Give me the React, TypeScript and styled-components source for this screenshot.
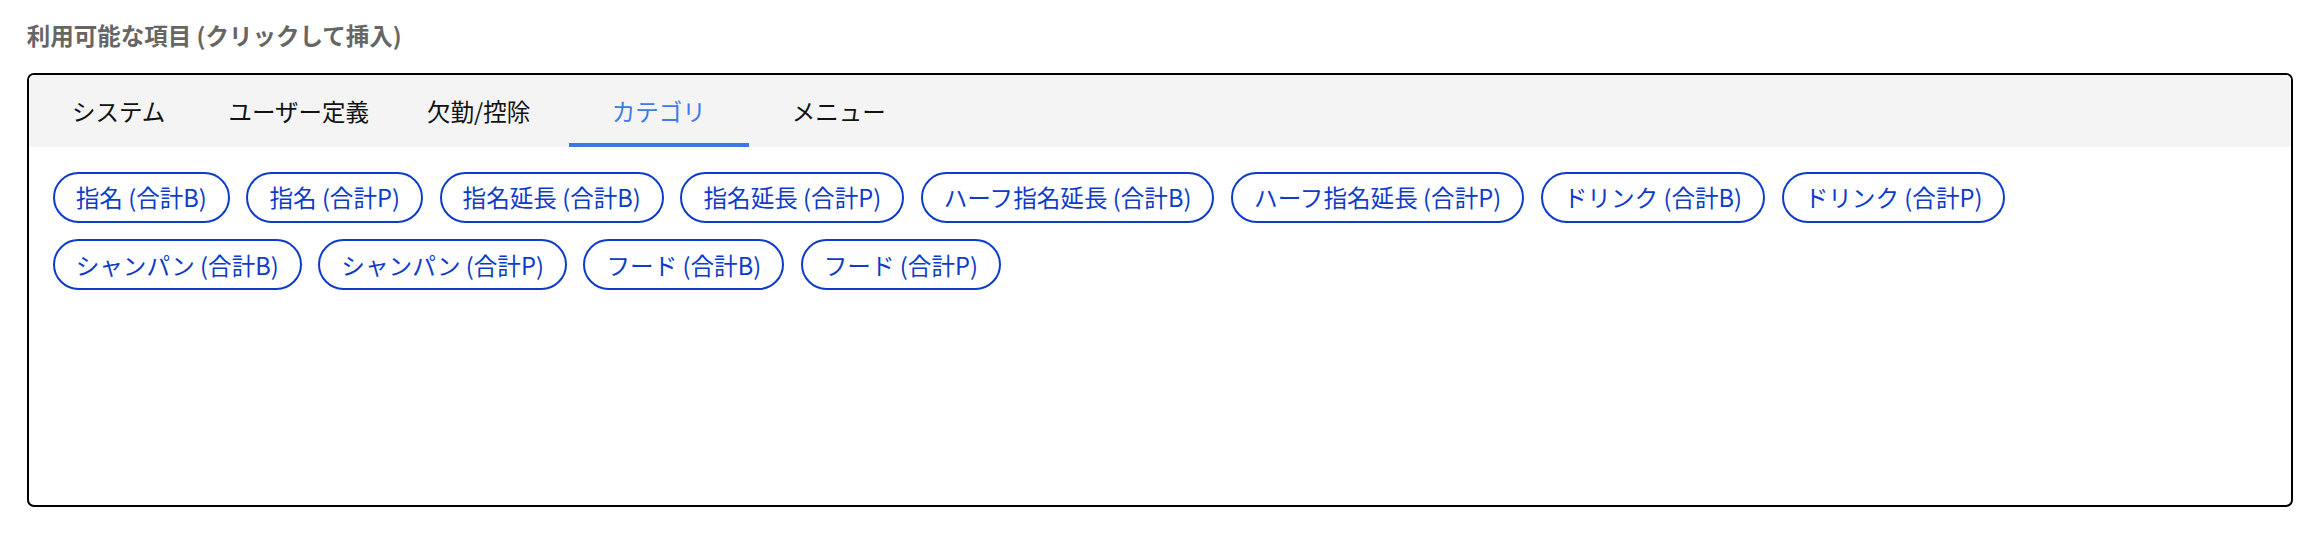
import React from "react";
import styled, { createGlobalStyle } from "styled-components";

const GlobalStyle = createGlobalStyle`
  html, body { margin: 0; padding: 0; background: #ffffff; }
  body { font-family: "Noto Sans CJK JP", "Noto Sans", sans-serif; }
  * { box-sizing: border-box; }
`;

const Page = styled.div`
  padding: 17px 21px 0 26.7px;
`;

const Title = styled.div`
  font-size: 23.5px;
  line-height: 36px;
  font-weight: 700;
  color: #666666;
  margin: 0 0 20.3px;
`;

const Panel = styled.div`
  border: 2px solid #000000;
  border-radius: 7px;
  height: 434px;
  overflow: hidden;
  display: flex;
  flex-direction: column;
`;

const TabBar = styled.div`
  display: flex;
  background: #f4f4f4;
  height: 71.4px;
  flex-shrink: 0;
`;

const Tab = styled.button<{ $active?: boolean }>`
  appearance: none;
  border: none;
  background: transparent;
  min-width: 180px;
  padding: 4px 18px 0;
  height: 100%;
  display: flex;
  align-items: center;
  justify-content: center;
  font-family: inherit;
  font-size: 23.5px;
  color: ${(p) => (p.$active ? "#3e7be6" : "#111111")};
  border-bottom: 4px solid ${(p) => (p.$active ? "#3b78e6" : "transparent")};
  cursor: pointer;
`;

const ChipArea = styled.div`
  display: flex;
  flex-direction: column;
  gap: 16.6px;
  padding: 25px 24px;
`;

const ChipRow = styled.div`
  display: flex;
  flex-wrap: wrap;
  gap: 16.6px;
`;

const Chip = styled.button`
  appearance: none;
  background: #ffffff;
  border: 2px solid #0c3cc9;
  border-radius: 26px;
  height: 51px;
  padding: 0 21px;
  font-family: inherit;
  font-size: 23.6px;
  color: #0c3cc9;
  display: flex;
  align-items: center;
  white-space: nowrap;
  cursor: pointer;
`;

const tabs = ["システム", "ユーザー定義", "欠勤/控除", "カテゴリ", "メニュー"];
const rows = [
  [
    "指名 (合計B)",
    "指名 (合計P)",
    "指名延長 (合計B)",
    "指名延長 (合計P)",
    "ハーフ指名延長 (合計B)",
    "ハーフ指名延長 (合計P)",
    "ドリンク (合計B)",
    "ドリンク (合計P)",
  ],
  ["シャンパン (合計B)", "シャンパン (合計P)", "フード (合計B)", "フード (合計P)"],
];

export default function App() {
  return (
    <>
      <GlobalStyle />
      <Page>
        <Title>利用可能な項目 (クリックして挿入)</Title>
        <Panel>
          <TabBar>
            {tabs.map((t) => (
              <Tab key={t} $active={t === "カテゴリ"}>
                {t}
              </Tab>
            ))}
          </TabBar>
          <ChipArea>
            {rows.map((row, r) => (
              <ChipRow key={r}>
                {row.map((c) => (
                  <Chip key={c}>{c}</Chip>
                ))}
              </ChipRow>
            ))}
          </ChipArea>
        </Panel>
      </Page>
    </>
  );
}
